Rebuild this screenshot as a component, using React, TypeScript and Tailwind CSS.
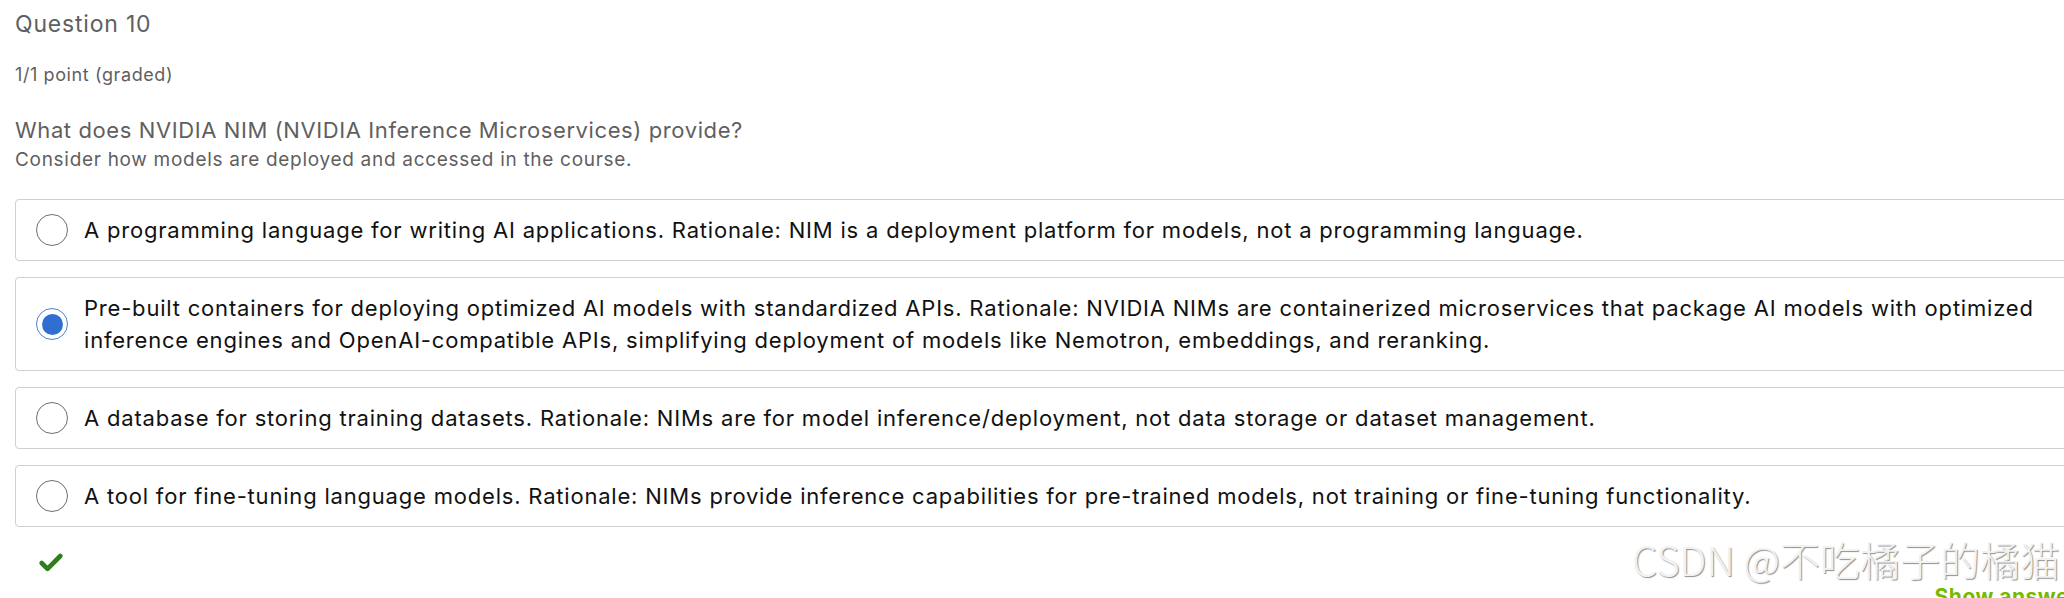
import { Check } from "lucide-react";

const OPTIONS = [
  {
    id: "a",
    lines: [
      "A programming language for writing AI applications. Rationale: NIM is a deployment platform for models, not a programming language.",
    ],
  },
  {
    id: "b",
    lines: [
      "Pre-built containers for deploying optimized AI models with standardized APIs. Rationale: NVIDIA NIMs are containerized microservices that package AI models with optimized",
      "inference engines and OpenAI-compatible APIs, simplifying deployment of models like Nemotron, embeddings, and reranking.",
    ],
    selected: true,
  },
  {
    id: "c",
    lines: [
      "A database for storing training datasets. Rationale: NIMs are for model inference/deployment, not data storage or dataset management.",
    ],
  },
  {
    id: "d",
    lines: [
      "A tool for fine-tuning language models. Rationale: NIMs provide inference capabilities for pre-trained models, not training or fine-tuning functionality.",
    ],
  },
];

function Radio({ checked }: { checked?: boolean }) {
  if (checked) {
    return (
      <span className="flex size-[32px] shrink-0 items-center justify-center rounded-full border-[1.5px] border-[#4a84d0] bg-white">
        <span className="size-[21px] rounded-full bg-[#2f6fd0]" />
      </span>
    );
  }
  return <span className="size-[32px] shrink-0 rounded-full border-[1.5px] border-[#6e6e6e] bg-white" />;
}

export default function App() {
  return (
    <div className="relative h-[598px] w-[2064px] overflow-hidden bg-white font-['Inter',sans-serif]">
      <div className="w-[2078px] pl-[15px] pt-[8px]">
        {/* Header */}
        <h2 className="text-[23px] leading-[32px] tracking-[0.8px] text-[#5f5f5f]">Question 10</h2>
        <p className="mt-[22px] text-[18px] leading-[26px] tracking-[0.6px] text-[#5f5f5f]">1/1 point (graded)</p>
        <p className="mt-[27px] text-[22px] leading-[30px] tracking-[0.6px] text-[#5f5f5f]">
          What does NVIDIA NIM (NVIDIA Inference Microservices) provide?
        </p>
        <p className="mt-[2px] text-[19px] leading-[26px] tracking-[0.7px] text-[#5f5f5f]">
          Consider how models are deployed and accessed in the course.
        </p>

        {/* Options */}
        <div className="mt-[26px] flex flex-col gap-[16px]">
          {OPTIONS.map((o) => (
            <label
              key={o.id}
              className="flex items-center gap-[16px] rounded-[4px] border border-[#cfcfcf] py-[14px] pl-[20px] pr-4"
            >
              <Radio checked={o.selected} />
              <span className="text-[22px] leading-[32px] tracking-[0.8px] text-[#111]">
                {o.lines.map((l, i) => (
                  <span key={i} className="block whitespace-nowrap">
                    {l}
                  </span>
                ))}
              </span>
            </label>
          ))}
        </div>

        {/* Result row */}
        <div className="mt-[22px] flex items-start justify-between">
          <Check className="ml-[22px] size-[28px] text-[#2f7d1f]" strokeWidth={4} />
          <button className="mt-[36px] text-[21px] font-bold leading-[24px] tracking-[0.5px] text-[#76b900]">Show answer</button>
        </div>
      </div>

      {/* Watermark */}
      <div className="absolute right-[4px] top-[534px] font-['Noto_Sans_CJK_SC',sans-serif] text-[40px] font-light leading-[50px] text-[#f2f2f2] [text-shadow:1px_1px_1px_#8f8f8f]">
        CSDN @不吃橘子的橘猫
      </div>
    </div>
  );
}
